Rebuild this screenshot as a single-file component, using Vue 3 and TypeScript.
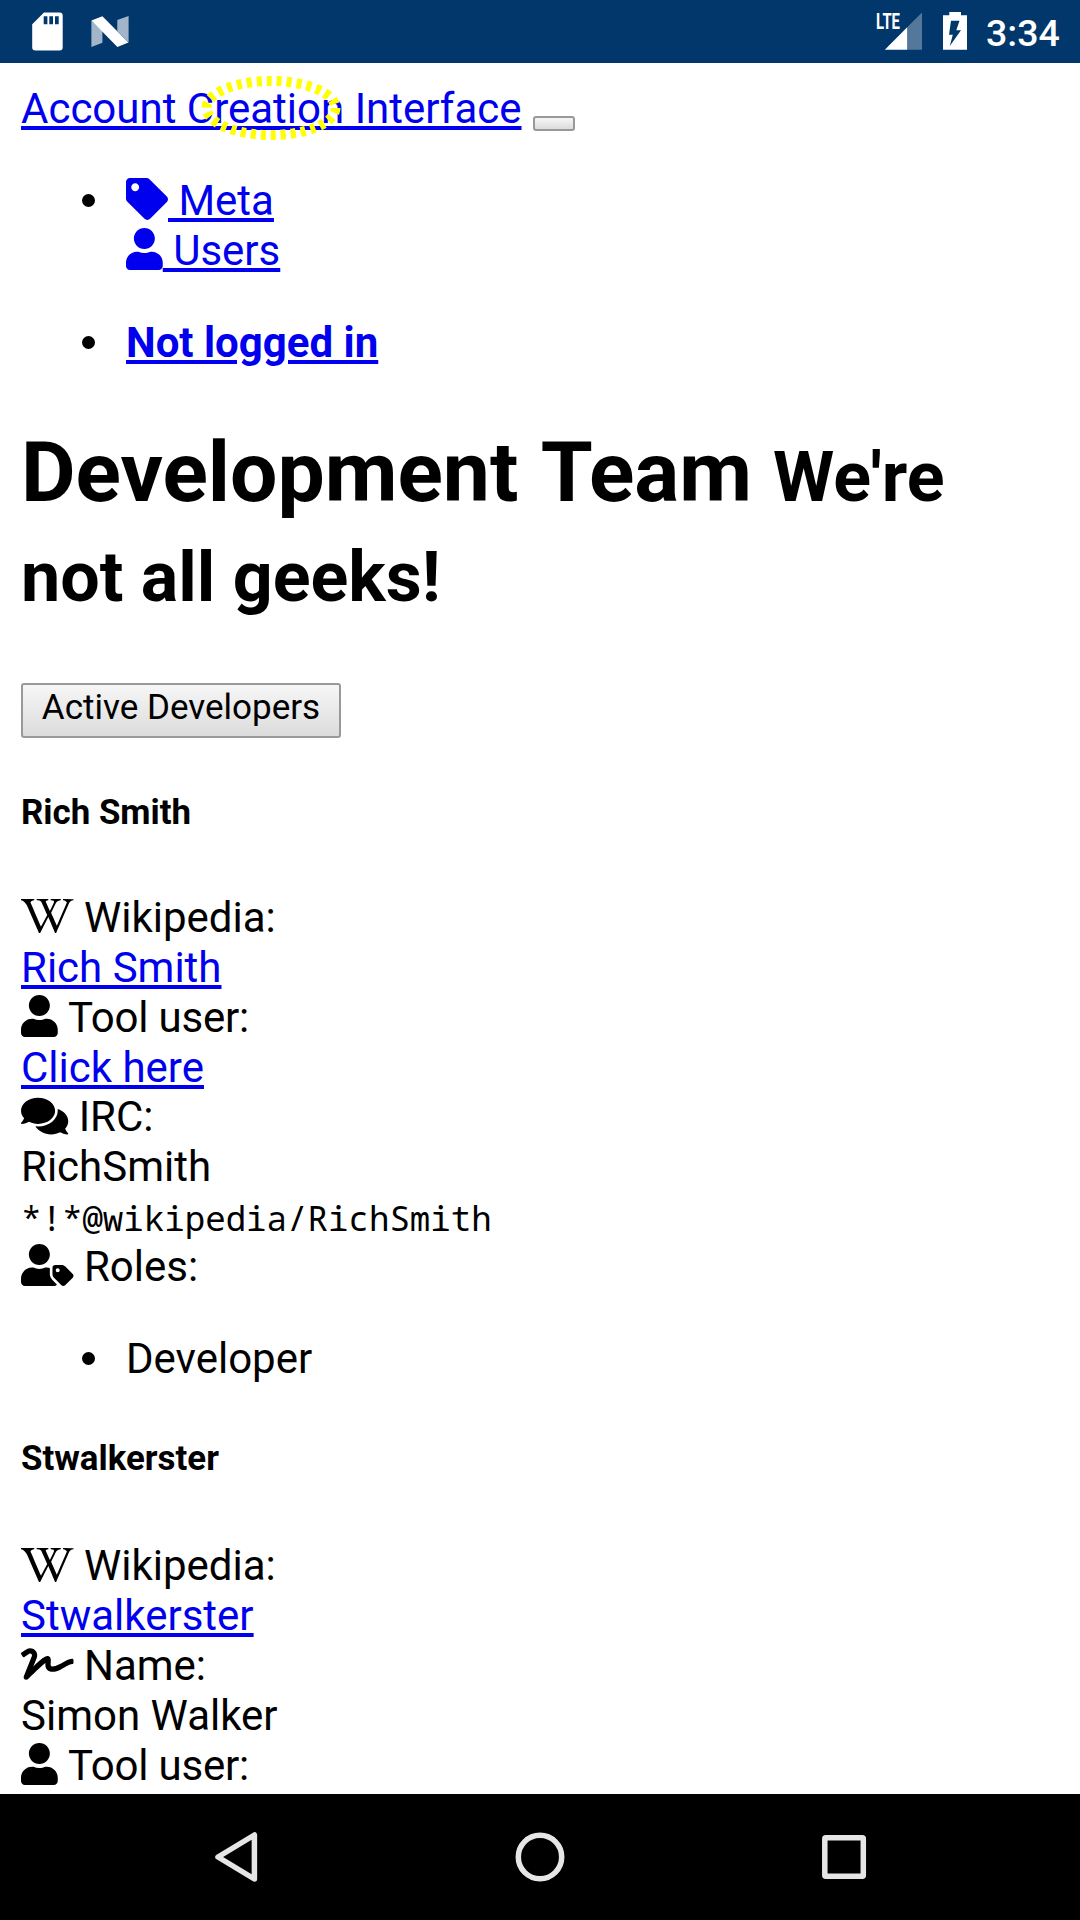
<script setup lang="ts">
type IconName = 'tag' | 'user' | 'wikipedia' | 'comments' | 'roles' | 'signature'

interface Glyph {
  width: number
  path: string
}

interface Field {
  icon: IconName
  label: string
  value?: string
  link?: boolean
  code?: string
}

interface Developer {
  name: string
  fields: Field[]
  roles: string[]
}

const glyphs: Record<IconName, Glyph> = {
  tag: {
    width: 512,
    path: 'M0 252.118V48C0 21.49 21.49 0 48 0h204.118a48 48 0 0 1 33.941 14.059l211.882 211.882c18.745 18.745 18.745 49.137 0 67.882L293.823 497.941c-18.745 18.745-49.137 18.745-67.882 0L14.059 286.059A48 48 0 0 1 0 252.118zM112 64c-26.51 0-48 21.49-48 48s21.49 48 48 48 48-21.49 48-48-21.49-48-48-48z',
  },
  user: {
    width: 448,
    path: 'M224 256c70.7 0 128-57.3 128-128S294.7 0 224 0 96 57.3 96 128s57.3 128 128 128zm89.6 32h-16.7c-22.2 10.2-46.9 16-72.9 16s-50.6-5.8-72.9-16h-16.7C60.2 288 0 348.2 0 422.4V464c0 26.5 21.5 48 48 48h352c26.5 0 48-21.5 48-48v-41.6c0-74.2-60.2-134.4-134.4-134.4z',
  },
  wikipedia: {
    width: 640,
    path: 'M640 51.2l-.3 12.2c-28.1.8-45 15.8-55.8 40.3-25 57.8-103.3 240-155.3 358.6H415l-81.9-193.1c-32.5 63.6-68.3 130-99.2 193.1-.3.3-15 0-15-.3C172 352.3 122.8 243.4 75.8 133.4 64.4 106.7 26.4 63.4.2 63.7c0-3.1-.3-10-.3-14.2h161.9v13.9c-19.2 1.1-52.8 13.3-43.3 34.2 21.9 49.7 103.6 240.3 125.6 288.6 15-29.7 57.8-109.2 75.3-142.8-13.9-28.3-58.6-133.9-72.8-160-9.7-17.8-36.1-19.4-55.8-19.7V49.8l142.5.3v13.1c-19.4.6-38.1 7.8-29.4 26.1 18.9 40 30.6 68.1 48.1 104.7 5.6-10.8 34.7-69.4 48.1-100.8 8.9-20.6-3.9-28.6-38.6-29.4.3-3.6 0-10.3.3-13.6 44.4-.3 111.1-.3 123.1-.6v13.6c-22.5.8-45.8 12.8-58.1 31.7l-59.2 122.8c6.4 16.1 63.3 142.8 69.2 156.7L559.2 91.8c-8.6-23.1-36.4-28.1-47.2-28.3V49.6l127.8 1.1.2.5z',
  },
  comments: {
    width: 576,
    path: 'M416 192c0-88.4-93.1-160-208-160S0 103.6 0 192c0 34.3 14.1 65.9 38 92-13.4 30.2-35.5 54.2-35.8 54.5-2.2 2.3-2.8 5.7-1.5 8.7S4.8 352 8 352c36.6 0 66.9-12.3 88.7-25 32.2 15.7 70.3 25 111.3 25 114.9 0 208-71.6 208-160zm122 220c23.9-26 38-57.7 38-92 0-66.9-53.5-124.2-129.3-148.1.9 6.6 1.3 13.3 1.3 20.1 0 105.9-107.7 192-240 192-10.8 0-21.3-.8-31.7-1.9C207.8 439.6 281.8 480 368 480c41 0 79.1-9.2 111.3-25 21.8 12.7 52.1 25 88.7 25 3.2 0 6.1-1.9 7.3-4.8 1.3-2.9.7-6.3-1.5-8.7-.3-.3-22.4-24.2-35.8-54.5z',
  },
  roles: {
    width: 640,
    path: 'M630.6 364.9l-90.3-90.2c-12-12-28.3-18.7-45.3-18.7h-79.3c-17.7 0-32 14.3-32 32v79.2c0 17 6.7 33.2 18.7 45.2l90.3 90.2c12.5 12.5 32.8 12.5 45.3 0l92.5-92.5c12.6-12.5 12.6-32.7.1-45.2zm-182.8-21c-13.3 0-24-10.7-24-24s10.7-24 24-24 24 10.7 24 24c0 13.2-10.7 24-24 24zm-223.8-88c70.7 0 128-57.3 128-128C352 57.3 294.7 0 224 0S96 57.3 96 128c0 70.6 57.3 127.9 128 127.9zm127.8 111.2V294c-12.2-3.6-24.9-6.2-38.2-6.2h-16.7c-22.2 10.2-46.9 16-72.9 16s-50.7-5.8-72.9-16h-16.7C60.2 287.9 0 348.1 0 422.3V464c0 26.5 21.5 48 48 48h352c15.5 0 29.1-7.5 37.9-18.9l-58-58c-18.1-18.1-28.1-42.2-28.1-67.9z',
  },
  signature: {
    width: 640,
    path: 'M623.2 192c-51.8 3.5-125.7 54.7-163.1 71.5-29.1 13.1-54.2 24.4-76.1 24.4-22.6 0-26-16.2-21.3-51.9 1.1-8 11.7-79.2-42.7-76.1-25.1 1.5-64.3 24.8-169.5 126L192 182.2c30.4-75.9-53.2-151.5-129.7-102.8L7.4 116.3C0 121-2.2 130.9 2.5 138.4l17.2 27c4.7 7.5 14.6 9.7 22.1 4.9l58-38.9c18.4-11.7 40.7 7.2 32.7 27.1L34.3 404.1C27.5 421 37 448 64 448c8.3 0 16.5-3.2 22.6-9.4 42.2-42.2 154.7-150.7 211.2-195.8-2.2 28.5-2.1 58.9 20.6 83.8 15.3 16.8 37.3 25.3 65.5 25.3 35.6 0 68-14.6 102.3-30 33-14.8 99-62.6 138.4-65.8 8.5-.7 15.2-7.3 15.2-15.8v-32.1c.2-9.1-7.5-16.8-16.6-16.2z',
  },
}

const navLinks: { icon: IconName; label: string }[] = [
  { icon: 'tag', label: 'Meta' },
  { icon: 'user', label: 'Users' },
]

const developers: Developer[] = [
  {
    name: 'Rich Smith',
    fields: [
      { icon: 'wikipedia', label: 'Wikipedia:', value: 'Rich Smith', link: true },
      { icon: 'user', label: 'Tool user:', value: 'Click here', link: true },
      { icon: 'comments', label: 'IRC:', value: 'RichSmith', code: '*!*@wikipedia/RichSmith' },
      { icon: 'roles', label: 'Roles:' },
    ],
    roles: ['Developer'],
  },
  {
    name: 'Stwalkerster',
    fields: [
      { icon: 'wikipedia', label: 'Wikipedia:', value: 'Stwalkerster', link: true },
      { icon: 'signature', label: 'Name:', value: 'Simon Walker' },
      { icon: 'user', label: 'Tool user:' },
    ],
    roles: [],
  },
]

const viewBox = (name: IconName): string => `0 0 ${glyphs[name].width} 512`
const iconWidth = (name: IconName): string => `${glyphs[name].width / 512}em`
</script>

<template>
  <div class="screen">
    <header class="status">
      <div class="status-group notifications">
        <svg width="31" height="39" viewBox="0 0 31 39">
          <path fill="#fff" fill-rule="evenodd" d="M12 .4H27.500a3.200 3.200 0 0 1 3.200 3.200V35.200a3.200 3.200 0 0 1-3.200 3.200H3.400A3.200 3.200 0 0 1 .2 35.200V12.200ZM11.700 4.200v8h3.700v-8ZM17.300 4.200v8H21v-8ZM23 4.200v8h3.700v-8Z" />
        </svg>
        <svg width="38" height="31" viewBox="0 0 38 31">
          <path fill="#fff" opacity=".64" d="M.4 4.500L11.400 15V26.800L.4 31ZM26.300 4L37.600 0V26.500L26.300 15Z" />
          <path fill="#fff" d="M.4 4.600L11.400.2L37.400 26.600L26.400 31Z" />
        </svg>
      </div>
      <div class="status-group">
        <svg class="signal" width="48" height="39" viewBox="0 0 48 39">
          <path fill="#fff" opacity=".33" d="M33.200 15.300L48 .6V37.700H33.200Z" />
          <path fill="#fff" d="M33.200 15.300V37.700H10.800Z" />
          <text x="2" y="17" textLength="24" lengthAdjust="spacingAndGlyphs">LTE</text>
        </svg>
        <svg class="battery" width="24" height="38" viewBox="0 0 24 38">
          <path fill="#fff" fill-rule="evenodd" d="M6.300 0H18v3.200H24V37.700H0V3.200H6.300ZM8 8.800L6 22.800H9.800L6.800 34L18 18.300H13.300L16.500 8.800Z" />
        </svg>
        <span class="clock">3:34</span>
      </div>
    </header>

    <main class="page">
      <nav>
        <div class="brand-row">
          <a class="brand">Account Creation Interface</a>
          <button class="toggler" type="button" aria-label="menu"></button>
          <svg class="marker" width="150" height="74" viewBox="0 0 150 74">
            <ellipse cx="75" cy="37" rx="64.500" ry="27" fill="none" stroke="#ffff00" stroke-width="10" stroke-dasharray="5 5" />
          </svg>
        </div>
        <ul>
          <li>
            <div>
              <div v-for="item in navLinks" :key="item.label" class="line">
                <a><svg class="icon" :viewBox="viewBox(item.icon)" :style="{ width: iconWidth(item.icon) }"><path :d="glyphs[item.icon].path" /></svg>&nbsp;{{ item.label }}</a>
              </div>
            </div>
          </li>
        </ul>
        <ul>
          <li><a class="strong">Not logged in</a></li>
        </ul>
      </nav>

      <h1>Development <span class="team">Team</span> <small>We're not all geeks!</small></h1>

      <button class="tab" type="button">Active Developers</button>

      <section v-for="dev in developers" :key="dev.name" class="developer">
        <h5>{{ dev.name }}</h5>
        <template v-for="field in dev.fields" :key="field.label">
          <div class="line" :class="{ tight: field.label.startsWith('T') }">
            <svg class="icon" :viewBox="viewBox(field.icon)" :style="{ width: iconWidth(field.icon) }"><path :d="glyphs[field.icon].path" /></svg>&nbsp;{{ field.label }}
          </div>
          <div v-if="field.value" class="line">
            <a v-if="field.link">{{ field.value }}</a>
            <span v-else>{{ field.value }}</span>
          </div>
          <div v-if="field.code" class="line"><code>{{ field.code }}</code></div>
        </template>
        <ul v-if="dev.roles.length">
          <li v-for="role in dev.roles" :key="role">{{ role }}</li>
        </ul>
      </section>
    </main>

    <footer class="softkeys">
      <svg width="50" height="56" viewBox="0 0 50 56">
        <path d="M7 28L43.400 6V50Z" />
      </svg>
      <svg width="56" height="56" viewBox="0 0 56 56">
        <circle cx="28" cy="28" r="21.700" />
      </svg>
      <svg width="50" height="56" viewBox="0 0 50 56">
        <rect x="5.800" y="8.800" width="38.500" height="38.500" rx="1" />
      </svg>
    </footer>
  </div>
</template>

<style>
body {
  background: #fff;
}
</style>

<style scoped>
.screen {
  display: flex;
  flex-direction: column;
  width: 1080px;
  height: 1920px;
  overflow: hidden;
  background: #fff;
  color: #000;
  font-family: Roboto, "Liberation Sans", sans-serif;
  font-size: 42px;
  line-height: 49.875px;
}

.status {
  flex: none;
  display: flex;
  justify-content: space-between;
  box-sizing: border-box;
  height: 63px;
  padding: 12px 21px 0 32px;
  background: #01376b;
}

.status svg {
  display: block;
  overflow: visible;
}

.status-group {
  display: flex;
  align-items: flex-start;
}

.notifications {
  gap: 28px;
}

.notifications svg + svg {
  margin-top: 4px;
}

.signal {
  margin-right: 21px;
}

.signal text {
  font-size: 21.5px;
  font-weight: 700;
  fill: #fff;
}

.battery {
  margin-right: 19px;
}

.clock {
  width: 73px;
  margin-top: 1px;
  color: #fff;
  font-size: 37.5px;
  font-weight: 500;
  line-height: 41px;
  white-space: nowrap;
}

.page {
  flex: 1;
  min-height: 0;
  overflow: hidden;
  padding: 21px 21px 0;
}

a {
  color: #0000ee;
  text-decoration: underline;
}

.strong {
  font-weight: 700;
}

.brand-row {
  position: relative;
  display: flex;
  align-items: flex-start;
}

.marker {
  position: absolute;
  left: 174.5px;
  top: -13px;
}

button {
  box-sizing: border-box;
  border: 2px solid #999;
  border-radius: 3px;
  background: linear-gradient(#f6f6f6, #dcdcdc);
  color: #000;
  font-family: inherit;
}

.toggler {
  width: 42px;
  height: 15px;
  margin: 32px 0 0 11px;
  padding: 0;
}

ul {
  margin: 42px 0;
  padding-left: 105px;
  list-style: none;
}

li {
  display: flex;
  align-items: flex-start;
}

li::before {
  content: "";
  flex: none;
  width: 13.5px;
  height: 13.5px;
  margin: 18px 31px 0 -44.5px;
  border-radius: 50%;
  background: #000;
}

.icon {
  height: 1em;
  vertical-align: -0.125em;
  fill: currentColor;
  overflow: visible;
}

h1 {
  margin: 55.4px 0 60.6px;
  font-size: 84px;
  line-height: 99.75px;
}

.team {
  margin-left: 1.5px;
}

h1 small {
  font-size: 70px;
  line-height: 1;
}

.tab {
  display: block;
  width: 320px;
  height: 55px;
  padding: 0 0 6px;
  font-size: 35px;
  line-height: 41px;
  white-space: nowrap;
}

h5 {
  margin: 54.3px 0 58.6px;
  font-size: 34.86px;
  line-height: 42px;
}

.developer + .developer h5 {
  margin: 54.5px 0 61px;
}

.line {
  height: 49.875px;
  white-space: nowrap;
}

.tight {
  letter-spacing: -0.2px;
}

code {
  font-family: "Noto Sans Mono", "DejaVu Sans Mono", monospace;
  font-size: 34.125px;
}

.softkeys {
  flex: none;
  display: flex;
  justify-content: space-between;
  align-items: center;
  box-sizing: border-box;
  height: 126px;
  padding: 0 211px 0 211px;
  background: #000;
}

.softkeys svg {
  fill: none;
  stroke: #e6e6e6;
  stroke-width: 5.5;
  stroke-linejoin: round;
}
</style>
